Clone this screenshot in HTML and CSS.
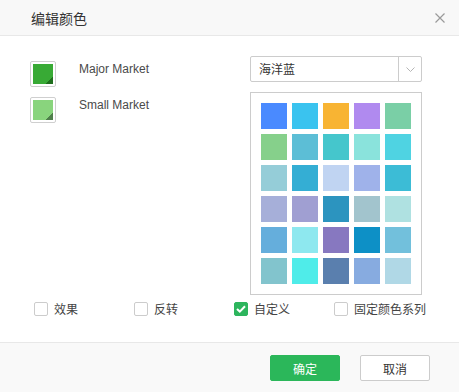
FILE: index.html
```html
<!DOCTYPE html>
<html lang="zh">

<head>
  <meta charset="UTF-8" />
  <meta name="viewport" content="width=device-width, initial-scale=1" />
  <title>编辑颜色</title>
  <link rel="stylesheet" href="styles.css">
</head>

<body>
  <div class="dialog">
    <div class="dialog-header">
      <span class="dialog-title">编辑颜色</span>
      <span class="close-btn">
        <svg width="10" height="10" viewBox="0 0 10 10">
          <path d="M0.5 0.5 L9.5 9.5 M9.5 0.5 L0.5 9.5" stroke="#9a9a9a" stroke-width="1.2" fill="none" />
        </svg>
      </span>
    </div>

    <div class="dialog-body">
      <div class="top-row">
        <div class="legend">
          <div class="legend-item">
            <span class="swatch"><span class="swatch-fill major"></span></span>
            <span class="legend-label">Major Market</span>
          </div>
          <div class="legend-item">
            <span class="swatch"><span class="swatch-fill small"></span></span>
            <span class="legend-label">Small Market</span>
          </div>
        </div>

        <div class="picker">
          <div class="select">
            <span class="select-value">海洋蓝</span>
            <span class="select-arrow">
              <svg width="9" height="5" viewBox="0 0 9 5">
                <path d="M0.5 0.5 L4.5 4.5 L8.5 0.5" stroke="#b5b5b5" stroke-width="1" fill="none" />
              </svg>
            </span>
          </div>
          <div class="palette" id="palette"></div>
        </div>
      </div>

      <div class="options">
        <label class="opt"><span class="checkbox"></span>效果</label>
        <label class="opt"><span class="checkbox"></span>反转</label>
        <label class="opt"><span class="checkbox checked">
            <svg width="10" height="8" viewBox="0 0 10 8">
              <path d="M1 4 L3.8 6.6 L9 1.2" stroke="#fff" stroke-width="2" fill="none" />
            </svg>
          </span>自定义</label>
        <label class="opt"><span class="checkbox"></span>固定颜色系列</label>
      </div>
    </div>

    <div class="dialog-footer">
      <button class="btn btn-ok">确定</button>
      <button class="btn btn-cancel">取消</button>
    </div>
  </div>

  <script>
    const colors = [
      "#4a8aff", "#3ac3ef", "#f8b433", "#b08aef", "#7acfa6",
      "#86d08b", "#5cbed6", "#45c6cc", "#8ae3dc", "#4fd3e2",
      "#95cdd8", "#34aed4", "#c0d4f2", "#9fb2ea", "#3cbcd6",
      "#a6afd9", "#a09fd2", "#2c94bf", "#a2c4cd", "#afe1e1",
      "#65aedc", "#8ee8ef", "#8778c0", "#0d90c6", "#72c0dc",
      "#82c4cd", "#4fece9", "#5a7fae", "#87abe0", "#b0d8e6"
    ];

    const palette = document.getElementById("palette");
    colors.forEach(c => {
      const cell = document.createElement("span");
      cell.className = "cell";
      cell.style.backgroundColor = c;
      palette.appendChild(cell);
    });
  </script>
</body>

</html>
```

FILE: styles.css
```css
html,
body {
  margin: 0;
  padding: 0;
  font-family: "Liberation Sans", "Noto Sans CJK SC", sans-serif;
  font-size: 12px;
  color: #444;
  background-color: #fff;
}

.dialog {
  width: 459px;
  height: 392px;
  display: flex;
  flex-direction: column;
  box-sizing: border-box;
}

.dialog-header {
  height: 35px;
  flex-shrink: 0;
  display: flex;
  align-items: center;
  justify-content: space-between;
  padding: 0 14px 0 31px;
  background-color: #f8f8f8;
  border-bottom: 1px solid #e8e8e8;
}

.dialog-title {
  font-family: "Noto Sans CJK SC", sans-serif;
  font-size: 14px;
  color: #333;
  line-height: 18px;
}

.close-btn {
  display: flex;
  width: 10px;
  height: 10px;
}

.dialog-body {
  flex: 1;
  padding: 20px 37px 0 30px;
}

.top-row {
  display: flex;
  justify-content: space-between;
}

.legend {
  margin-top: 5px;
  display: flex;
  flex-direction: column;
  gap: 10px;
}

.legend-item {
  display: flex;
  align-items: flex-start;
  gap: 23px;
}

.swatch {
  width: 20px;
  height: 20px;
  padding: 2px;
  border: 1px solid #cfcfcf;
  border-radius: 2px;
  display: block;
}

.swatch-fill {
  display: block;
  width: 20px;
  height: 20px;
}

.swatch-fill.major {
  background: linear-gradient(135deg, #38aa35 0%, #38aa35 82%, #1f6e1d 82%, #1f6e1d 100%);
}

.swatch-fill.small {
  background: linear-gradient(135deg, #89d47d 0%, #89d47d 82%, #4f7f4b 82%, #4f7f4b 100%);
}

.legend-label {
  line-height: 16px;
  color: #4a4a4a;
}

.picker {
  width: 172px;
  display: flex;
  flex-direction: column;
  gap: 10px;
}

.select {
  height: 24px;
  border: 1px solid #cccccc;
  border-radius: 2px;
  display: flex;
  align-items: stretch;
}

.select-value {
  flex: 1;
  padding-left: 8px;
  line-height: 24px;
  font-family: "Noto Sans CJK SC", sans-serif;
  color: #333;
}

.select-arrow {
  width: 22px;
  border-left: 1px solid #cccccc;
  display: flex;
  align-items: center;
  justify-content: center;
}

.palette {
  border: 1px solid #cccccc;
  padding: 10px;
  display: grid;
  grid-template-columns: repeat(5, 26px);
  grid-auto-rows: 26px;
  gap: 5px;
}

.cell {
  display: block;
}

.options {
  margin-top: 6px;
  margin-left: 4px;
  display: flex;
}

.opt {
  width: 100px;
  flex-shrink: 0;
  display: flex;
  align-items: center;
  gap: 6px;
  line-height: 16px;
  font-family: "Noto Sans CJK SC", sans-serif;
  color: #444;
}

.checkbox {
  width: 12px;
  height: 12px;
  border: 1px solid #cccccc;
  border-radius: 2px;
  background: #fff;
  display: flex;
  align-items: center;
  justify-content: center;
}

.checkbox.checked {
  background-color: #2db55d;
  border-color: #2db55d;
}

.dialog-footer {
  flex-shrink: 0;
  border-top: 1px solid #e8e8e8;
  background-color: #f9f9f9;
  display: flex;
  justify-content: flex-end;
  align-items: flex-start;
  gap: 20px;
  padding: 12px 29px 0 0;
  box-sizing: border-box;
  height: 50px;
}

.btn {
  width: 70px;
  height: 26px;
  border-radius: 2px;
  font-family: "Noto Sans CJK SC", sans-serif;
  font-size: 12px;
  cursor: pointer;
  padding: 0;
}

.btn-ok {
  background-color: #2bb75a;
  border: 1px solid #2bb75a;
  color: #fff;
}

.btn-cancel {
  background-color: #fff;
  border: 1px solid #cccccc;
  color: #333;
}
```
